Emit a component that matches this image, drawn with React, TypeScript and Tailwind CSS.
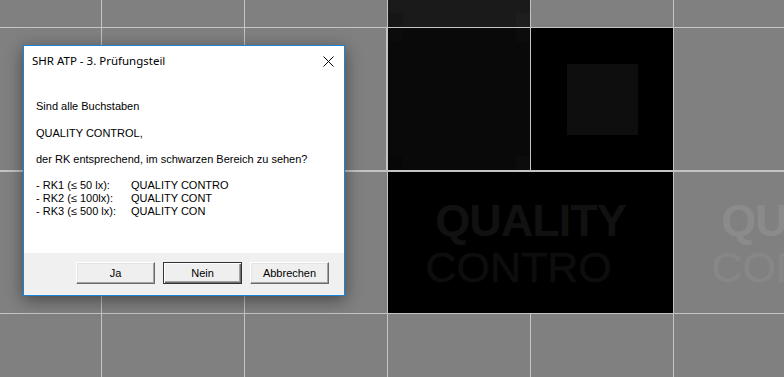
import React from 'react';

const btnBase =
  "w-[79px] h-[22px] flex items-center justify-center text-[11px] text-black bg-[#efefef] border border-t-white border-l-white border-b-[#6b6b6b] border-r-[#6b6b6b] shadow-[inset_-1px_-1px_0_#a3a3a3,inset_1px_1px_0_#e4e4e4]";

const Corner: React.FC<{ tone: string }> = ({ tone }) => <div className={`w-[14px] h-[14px] ${tone}`} />;

const GrayCell: React.FC<{ shade?: boolean }> = ({ shade }) => (
  <div className={`bg-[#808080] ${shade ? 'shadow-[inset_0_1px_0_#c4c4c4]' : ''}`} />
);

const App: React.FC = () => {
  return (
    <div className="relative w-[784px] h-[377px] overflow-hidden bg-[#c4c4c4] font-['Liberation_Sans',Arial,sans-serif]">
      {/* test pattern */}
      <div className="grid grid-cols-[101px_repeat(6,142px)] grid-rows-[27px_repeat(3,142px)] gap-px">
        {/* row 0 */}
        <GrayCell />
        <GrayCell />
        <GrayCell />
        <div className="bg-[#1a1a1a] flex flex-col justify-end">
          <div className="flex justify-between pl-px">
            <Corner tone="bg-[#161616]" />
            <Corner tone="bg-[#1e1e1e]" />
          </div>
        </div>
        <GrayCell />
        <GrayCell />
        <GrayCell />

        {/* row 1 */}
        <GrayCell />
        <GrayCell />
        <div className="bg-[#808080] shadow-[inset_-1px_0_0_#c4c4c4]" />
        <div className="bg-[#090909] flex flex-col justify-between pl-px">
          <div className="flex justify-between">
            <Corner tone="bg-[#0b0b0b]" />
            <Corner tone="bg-[#0c0c0c]" />
          </div>
          <div className="flex justify-between">
            <Corner tone="bg-[#070707]" />
            <Corner tone="bg-[#0c0c0c]" />
          </div>
        </div>
        <div className="bg-black flex items-center justify-center">
          <div className="w-[71px] h-[71px] bg-[#0e0e0e]" />
        </div>
        <GrayCell />
        <GrayCell />

        {/* row 2 */}
        <GrayCell shade />
        <GrayCell shade />
        <GrayCell shade />
        <div className="col-span-2 bg-black shadow-[inset_0_1px_0_#c4c4c4] flex flex-col items-center pt-[27px]">
          <div className="text-[45px] leading-none font-bold tracking-[-1px] text-[#111111]">QUALITY</div>
          <div className="mt-[3px] text-[43px] leading-none text-[#0d0d0d] [-webkit-text-stroke:0.6px_#0d0d0d]">
            CONTRO<span className="text-black [-webkit-text-stroke:0]">L</span>
          </div>
        </div>
        <div className="col-span-2 bg-[#808080] shadow-[inset_0_1px_0_#c4c4c4] flex flex-col items-center pt-[27px]">
          <div className="text-[45px] leading-none font-bold tracking-[-1px] text-[#8b8b8b]">QUALITY</div>
          <div className="mt-[3px] text-[43px] leading-none text-[#878787] [-webkit-text-stroke:0.6px_#878787]">
            CONTRO<span className="text-[#808080] [-webkit-text-stroke:0]">L</span>
          </div>
        </div>

        {/* row 3 */}
        <GrayCell />
        <GrayCell />
        <GrayCell />
        <GrayCell />
        <GrayCell />
        <GrayCell />
        <GrayCell />
      </div>

      {/* dialog */}
      <div className="absolute left-[23px] top-[45px] w-[322px] h-[251px] border border-[#1883d7] bg-white flex flex-col shadow-[0_4px_16px_rgba(0,0,0,0.45)]">
        <div className="h-[30px] flex items-center justify-between pl-[8px] pr-[10px]">
          <span className="text-[11.5px] leading-[16px] text-black font-['Noto_Sans',sans-serif]">SHR ATP - 3. Prüfungsteil</span>
          <svg width="11" height="11" viewBox="0 0 11 11" className="block">
            <path d="M0.5 0.5 L10.5 10.5 M10.5 0.5 L0.5 10.5" stroke="#000" strokeWidth="1" fill="none" />
          </svg>
        </div>

        <div className="flex-1 pl-[12px] pt-[24px] text-[11px] leading-[13px] text-black">
          <div>Sind alle Buchstaben</div>
          <div className="mt-[14px]">QUALITY CONTROL,</div>
          <div className="mt-[13px]">der RK entsprechend, im schwarzen Bereich zu sehen?</div>
          <div className="mt-[13px] grid grid-cols-[95px_1fr]">
            <div>- RK1 (≤ 50 lx):</div>
            <div>QUALITY CONTRO</div>
            <div>- RK2 (≤ 100lx):</div>
            <div>QUALITY CONT</div>
            <div>- RK3 (≤ 500 lx):</div>
            <div>QUALITY CON</div>
          </div>
        </div>

        <div className="h-[42px] bg-[#f0f0f0] flex justify-end gap-[8px] pt-[9px] pr-[15px]">
          <button className={btnBase}>Ja</button>
          <button className="w-[79px] h-[22px] flex items-center justify-center text-[11px] text-black bg-[#efefef] border border-[#333333] shadow-[inset_1px_1px_0_#ffffff,inset_-1px_-1px_0_#6b6b6b,inset_-2px_-2px_0_#a3a3a3]">
            Nein
          </button>
          <button className={btnBase}>Abbrechen</button>
        </div>
      </div>
    </div>
  );
};

export default App;
